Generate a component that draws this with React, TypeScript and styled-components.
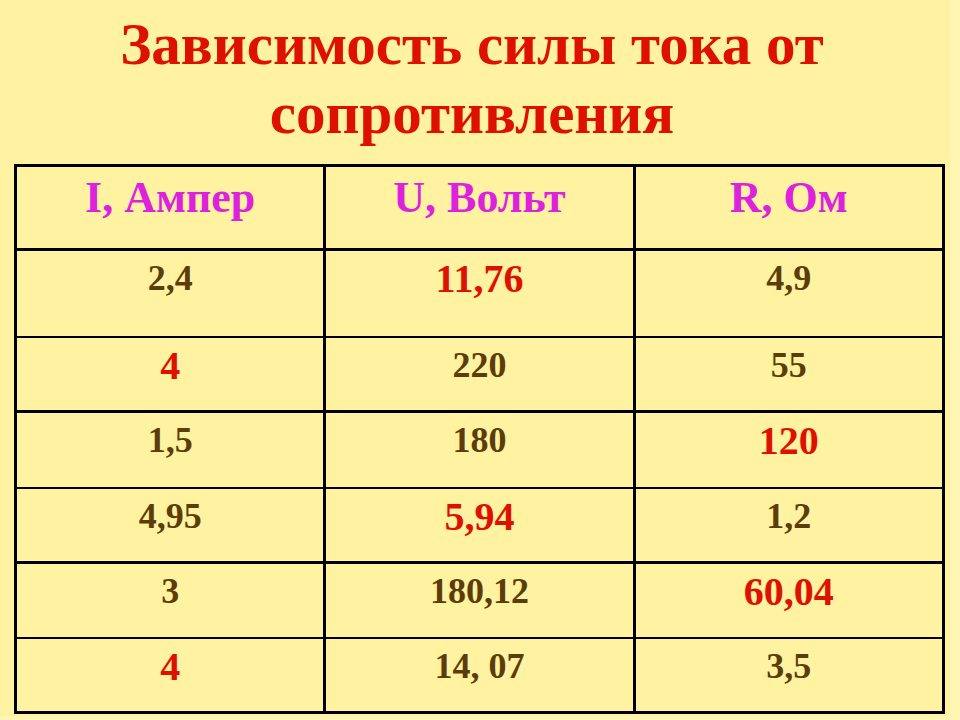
import React from "react";
import styled, { createGlobalStyle } from "styled-components";

const GlobalStyle = createGlobalStyle`
  html, body {
    margin: 0;
    padding: 0;
    background: #fff6b4;
  }
  body {
    font-family: "Liberation Serif", "Times New Roman", serif;
  }
`;

const Slide = styled.div`
  width: 950px;
  height: 716px;
  background: #fff2a0;
  display: flex;
  flex-direction: column;
  box-sizing: border-box;
  padding-top: 10px;
`;

const Title = styled.h1`
  margin: 0;
  padding-right: 6px;
  text-align: center;
  font-family: "Liberation Serif", "Times New Roman", serif;
  font-weight: bold;
  font-size: 59px;
  line-height: 69px;
  color: #dd1100;
`;

const Table = styled.table`
  margin: 16px 0 0 14px;
  width: 931px;
  border-collapse: collapse;
  table-layout: fixed;
  border: 3px solid #000;
`;

const Row = styled.tr<{ $h: number; $thin?: boolean }>`
  height: ${(p) => p.$h}px;
  border-bottom: ${(p) => (p.$thin ? "2px" : "3px")} solid #000;
`;

const HeadCell = styled.th`
  border-right: 3px solid #000;
  border-left: 3px solid #000;
  vertical-align: top;
  padding: 9px 0 0;
  text-align: center;
  font-family: "Liberation Serif", "Times New Roman", serif;
  font-weight: bold;
  font-size: 44px;
  line-height: 1;
  color: #dd22dd;
`;

const Cell = styled.td<{ $red?: boolean }>`
  border-right: 3px solid #000;
  border-left: 3px solid #000;
  vertical-align: top;
  padding: ${(p) => (p.$red ? "8px" : "9px")} 0 0;
  text-align: center;
  font-family: "Liberation Serif", "Times New Roman", serif;
  font-weight: bold;
  font-size: ${(p) => (p.$red ? "40px" : "36px")};
  line-height: 1;
  color: ${(p) => (p.$red ? "#dd1100" : "#5c3d0a")};
`;

type Val = { v: string; red?: boolean };

const rows: { h: number; thin?: boolean; cells: Val[] }[] = [
  { h: 87, thin: true, cells: [{ v: "2,4" }, { v: "11,76", red: true }, { v: "4,9" }] },
  { h: 75, cells: [{ v: "4", red: true }, { v: "220" }, { v: "55" }] },
  { h: 76, thin: true, cells: [{ v: "1,5" }, { v: "180" }, { v: "120", red: true }] },
  { h: 75, cells: [{ v: "4,95" }, { v: "5,94", red: true }, { v: "1,2" }] },
  { h: 75, thin: true, cells: [{ v: "3" }, { v: "180,12" }, { v: "60,04", red: true }] },
  { h: 75, cells: [{ v: "4", red: true }, { v: "14, 07" }, { v: "3,5" }] },
];

export default function App() {
  return (
    <>
      <GlobalStyle />
      <Slide>
        <Title>
          Зависимость силы тока от
          <br />
          сопротивления
        </Title>
        <Table>
          <tbody>
            <Row $h={84}>
              <HeadCell>I, Ампер</HeadCell>
              <HeadCell>U, Вольт</HeadCell>
              <HeadCell>R, Ом</HeadCell>
            </Row>
            {rows.map((r, i) => (
              <Row key={i} $h={r.h} $thin={r.thin}>
                {r.cells.map((c, j) => (
                  <Cell key={j} $red={c.red}>
                    {c.v}
                  </Cell>
                ))}
              </Row>
            ))}
          </tbody>
        </Table>
      </Slide>
    </>
  );
}
